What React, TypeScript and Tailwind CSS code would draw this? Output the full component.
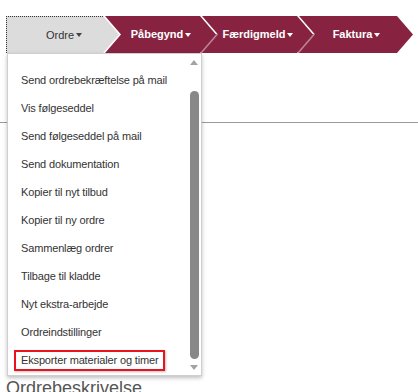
import React from 'react';

const TABS = [
  { label: 'Ordre', active: true, cls: 'w-[115px] z-[4]' },
  { label: 'Påbegynd', active: false, cls: 'w-[114px] -ml-[17px] z-[3]' },
  { label: 'Færdigmeld', active: false, cls: 'w-[114px] -ml-[17px] z-[2]' },
  { label: 'Faktura', active: false, cls: 'w-[117px] -ml-[17px] z-[1]' },
];

const MENU = [
  'Send ordrebekræftelse på mail',
  'Vis følgeseddel',
  'Send følgeseddel på mail',
  'Send dokumentation',
  'Kopier til nyt tilbud',
  'Kopier til ny ordre',
  'Sammenlæg ordrer',
  'Tilbage til kladde',
  'Nyt ekstra-arbejde',
  'Ordreindstillinger',
];

// Small down caret next to tab labels
const Caret = ({ light }: { light: boolean }) => (
  <span
    className={`ml-[2px] inline-block w-0 h-0 border-x-[3px] border-x-transparent border-t-[4px] ${
      light ? 'border-t-white' : 'border-t-[#444]'
    }`}
  />
);

const Tab = ({ label, active, cls }: { label: string; active: boolean; cls: string }) => (
  <div
    className={`relative h-[37px] shrink-0 ${cls} [clip-path:polygon(0_0,calc(100%-16px)_0,100%_50%,calc(100%-16px)_100%,0_100%)] ${
      active ? 'bg-white' : 'bg-[linear-gradient(to_bottom,#fff_50%,rgba(255,255,255,0.45)_50%)]'
    }`}
  >
    <div
      className={`h-full w-full flex items-center justify-center text-[11px] [clip-path:polygon(0_0,calc(100%-18px)_0,calc(100%-2px)_50%,calc(100%-18px)_100%,0_100%)] ${
        active
          ? 'bg-[#dcdcdc] text-[#333] border-t border-l border-dotted border-[#333]'
          : 'bg-[#872341] text-white font-bold'
      }`}
    >
      <span>{label}</span>
      <Caret light={!active} />
    </div>
  </div>
);

const DropdownMenu = () => (
  <div className="absolute left-[7px] top-[53px] z-10 w-[195px] h-[323px] flex bg-white border border-[#cfcfcf] shadow-[0_2px_4px_rgba(0,0,0,0.25)]">
    <div className="flex-1 pt-[12px] pl-[13px] text-[11px] text-[#333] tracking-[-0.15px]">
      {MENU.map((item) => (
        <div key={item} className="h-[28px] flex items-center whitespace-nowrap">
          {item}
        </div>
      ))}
      <div className="h-[28px] flex items-center whitespace-nowrap">
        <span className="-ml-[7px] px-[5px] leading-[17px] border-2 border-[#e8141b] shadow-[1px_1px_2px_rgba(0,0,0,0.25)]">
          Eksporter materialer og timer
        </span>
      </div>
    </div>

    {/* Scrollbar */}
    <div className="w-[14px] flex flex-col items-center">
      <span className="mt-[6px] w-0 h-0 border-x-[4px] border-x-transparent border-b-[5px] border-b-[#a3a3a3]" />
      <div className="mt-[26px] w-[9px] h-[268px] rounded-full bg-[#888]" />
      <span className="mt-[6px] w-0 h-0 border-x-[4px] border-x-transparent border-t-[5px] border-t-[#a3a3a3]" />
    </div>
  </div>
);

export default function App() {
  return (
    <div className="relative min-h-screen w-[418px] h-[392px] overflow-hidden bg-white font-['Liberation_Sans',Arial,sans-serif]">
      <div className="pt-[16px] pl-[6px] flex">
        {TABS.map((t) => (
          <Tab key={t.label} {...t} />
        ))}
      </div>

      <div className="mt-[69px] border-t border-[#999]" />

      <h2 className="mt-[254px] pl-[6px] text-[18px] leading-[22px] text-[#555]">Ordrebeskrivelse</h2>

      <DropdownMenu />
    </div>
  );
}
